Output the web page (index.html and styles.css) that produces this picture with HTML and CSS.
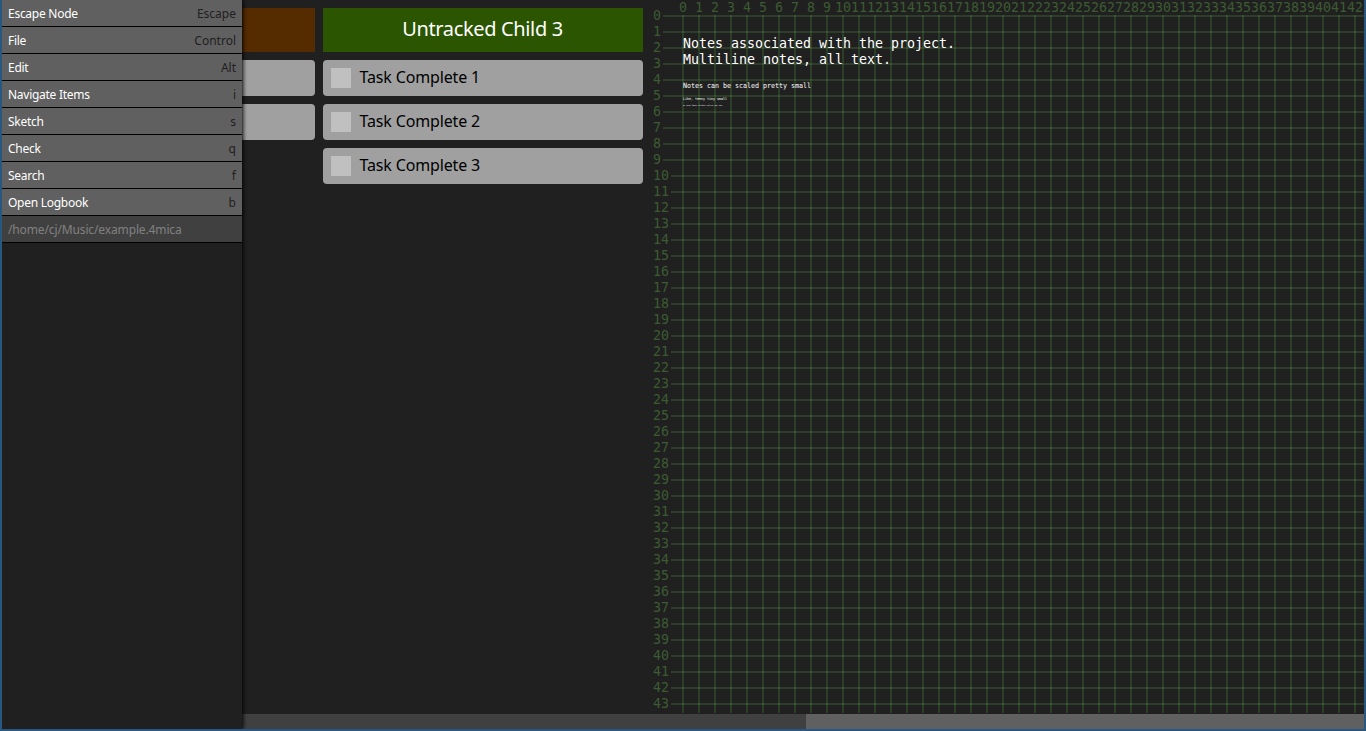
FILE: index.html
```html
<!DOCTYPE html>
<html lang="en">
<head>
<meta charset="utf-8">
<title>example.4mica</title>
<link rel="stylesheet" href="styles.css">
</head>
<body>
<div class="window">
  <main class="board">
    <section class="column">
      <h2 class="heading heading-brown"></h2>
      <div class="task"></div>
      <div class="task"></div>
    </section>
    <section class="column">
      <h2 class="heading heading-green"><span>Untracked Child 3</span></h2>
      <div class="task"><i class="box"></i><span>Task Complete 1</span></div>
      <div class="task"><i class="box"></i><span>Task Complete 2</span></div>
      <div class="task"><i class="box"></i><span>Task Complete 3</span></div>
    </section>
    <svg class="sketch" width="713" height="714" viewBox="651 0 713 714">
      <g id="grid" class="grid"></g>
      <g id="labels" class="labels"></g>
      <g class="notes">
        <text x="683" y="48" font-size="14.8" textLength="272" lengthAdjust="spacingAndGlyphs">Notes associated with the project.</text>
        <text x="683" y="64" font-size="14.8" textLength="208" lengthAdjust="spacingAndGlyphs">Multiline notes, all text.</text>
        <text x="683" y="88" font-size="7.2" textLength="128" lengthAdjust="spacingAndGlyphs">Notes can be scaled pretty small</text>
        <text x="683" y="100" font-size="3.7" textLength="44" lengthAdjust="spacingAndGlyphs">Like, teeny tiny small</text>
        <text x="683" y="106" font-size="1.9" textLength="39" lengthAdjust="spacingAndGlyphs">or even lower without notice can too</text>
      </g>
    </svg>
  </main>
  <div class="scrollbar"><div class="thumb"></div></div>
  <nav class="menu">
    <div class="item"><span>Escape Node</span><kbd>Escape</kbd></div>
    <div class="item"><span>File</span><kbd>Control</kbd></div>
    <div class="item"><span>Edit</span><kbd>Alt</kbd></div>
    <div class="item"><span>Navigate Items</span><kbd>i</kbd></div>
    <div class="item"><span>Sketch</span><kbd>s</kbd></div>
    <div class="item"><span>Check</span><kbd>q</kbd></div>
    <div class="item"><span>Search</span><kbd>f</kbd></div>
    <div class="item"><span>Open Logbook</span><kbd>b</kbd></div>
    <div class="item path"><span>/home/cj/Music/example.4mica</span></div>
  </nav>
</div>
<script src="grid.js"></script>
</body>
</html>
```
FILE: styles.css
```css
* { box-sizing: border-box; }
body { margin: 0; background: #202020; font-family: "Noto Sans", sans-serif; }
.window {
  position: relative;
  display: flex;
  flex-direction: column;
  width: 1366px;
  height: 731px;
  overflow: hidden;
  border: solid #285880;
  border-width: 0 2px 2px;
  background: #202020;
}
.board {
  display: flex;
  gap: 8px;
  height: 714px;
  padding-left: 33px;
}
.column {
  display: flex;
  flex-direction: column;
  flex: none;
  gap: 8px;
  width: 320px;
  padding-top: 8px;
  margin-left: -40px;
}
.column + .column { margin-left: 0; }
.heading {
  display: flex;
  align-items: center;
  justify-content: center;
  height: 44px;
  margin: 0;
  padding: 0 1px 3px 0;
  color: #fff;
  font-size: 20px;
  font-weight: 400;
  letter-spacing: -0.35px;
}
.heading-brown { background: #552b00; }
.heading-green { background: #2b5500; }
.task {
  display: flex;
  align-items: center;
  height: 36px;
  padding: 0 8px;
  gap: 8.5px;
  border-radius: 4px;
  background: #a0a0a0;
  color: #000;
  font-size: 16px;
  letter-spacing: -0.15px;
}
.task span { line-height: 20px; padding-bottom: 2px; }
.box { width: 20px; height: 20px; background: #c0c0c0; }
.sketch { display: block; flex: none; }
.grid { fill: #509040; fill-opacity: 0.27; }
.labels { fill: #3c5b32; font: 14.8px "DejaVu Sans Mono", monospace; }
.notes { fill: #fff; font-family: "DejaVu Sans Mono", monospace; }
.scrollbar {
  display: flex;
  justify-content: flex-end;
  height: 15px;
  background: #404040;
}
.thumb { width: 558px; background: #606060; }
.menu {
  position: absolute;
  left: 0;
  top: 0;
  width: 240px;
  height: 729px;
  background: #202020;
  box-shadow: 1px 0 4px #000;
}
.item {
  display: flex;
  align-items: center;
  justify-content: space-between;
  height: 27px;
  padding: 1px 6px 0;
  border-bottom: 1px solid #000;
  background: #606060;
  color: #fff;
  font-size: 12px;
  line-height: 18px;
}
.item span { letter-spacing: -0.27px; }
.item kbd { color: #202020; font-family: inherit; font-size: 12px; }
.path { background: #404040; color: #808080; }
.item.path span { letter-spacing: -0.13px; }
```
FILE: grid.js
```js
const ns = 'http://www.w3.org/2000/svg';
const grid = document.getElementById('grid');
const labels = document.getElementById('labels');

function line(x, y, width, height) {
  const rect = document.createElementNS(ns, 'rect');
  Object.entries({ x, y, width, height }).forEach(([k, v]) => rect.setAttribute(k, v));
  grid.append(rect);
}

function label(n, x, y) {
  const text = document.createElementNS(ns, 'text');
  const length = String(n).length * 8;
  text.setAttribute('x', x);
  text.setAttribute('y', y);
  text.setAttribute('textLength', length);
  text.setAttribute('lengthAdjust', 'spacingAndGlyphs');
  text.textContent = n;
  labels.append(text);
}

for (let i = 0; i <= 43; i++) {
  const start = i < 10 ? 663 : 671;
  line(start, 15 + i * 16, 1364 - start, 2);
  label(i, 653, 20 + i * 16);
}
for (let i = 0; i <= 42; i++) {
  line(682 + i * 16, 15, 2, 698);
  label(i, 683 + i * 16 - String(i).length * 4, 12);
}
```
